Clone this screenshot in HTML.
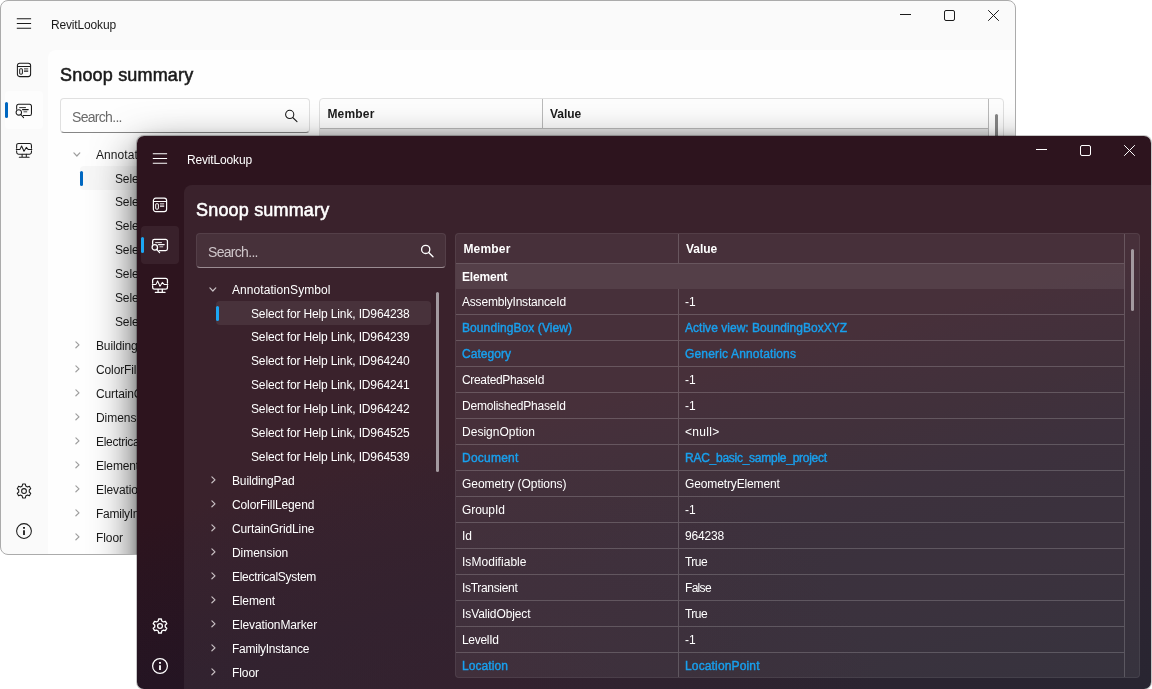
<!DOCTYPE html>
<html lang="en"><head><meta charset="utf-8"><title>RevitLookup</title>
<style>
*{box-sizing:border-box;margin:0;padding:0}
html,body{width:1152px;height:689px;overflow:hidden;background:#fff}
body{position:relative;font-family:"Liberation Sans",sans-serif;font-size:12px}
.win{position:absolute;overflow:hidden;will-change:transform;color:var(--fg);width:1016px;height:555px;border-radius:8px;border:1px solid var(--bd);background-clip:padding-box}
.win span,.win i{position:absolute;display:block}
.light{left:0;top:0;background-color:#fafafa;
 --bd:#ababab;--fg:#1b1b1b;--fg2:#6a6a6a;--fg3:#9e9e9e;--panel:#fefefe;--line:#bababa;--acc:#0067c0;--link:#0067c0;--selbg:#f7f7f7;--navsel:#fdfdfd;
 --gridbg:#fdfdfd;--groupbg:#e4e4e4;--sbg:#fefefe;--sbd:#e0e0e0;--sbb:#868686;--thumb:#868686}
.dark{left:136px;top:135px;background-image:radial-gradient(ellipse 420px 260px at 32% 100%,rgba(44,18,32,.55),rgba(44,18,32,0)),linear-gradient(165deg,#2d141e 0%,#2d141e 47%,#231523 67%,#1a1724 100%);
 --bd:rgba(0,0,0,.22);--fg:#ffffff;--fg2:#cfc6ca;--fg3:#c9c0c4;--line:rgba(255,255,255,.185);--acc:#1ca6f3;--link:#18a0ee;--selbg:rgba(255,255,255,.075);--navsel:rgba(255,255,255,.06);
 --gridbg:rgba(255,255,255,.068);--groupbg:rgba(255,255,255,.075);--sbg:rgba(255,255,255,.07);--sbd:rgba(255,255,255,.07);--sbb:#9a8c92;--thumb:#a39aa0}
.shadow{position:absolute;left:136px;top:135px;width:1014px;height:553px;border-radius:7px;box-shadow:0 16px 44px rgba(0,0,0,.7),0 1px 10px rgba(0,0,0,.2)}
.titlebar{position:absolute;left:0;top:0;right:0;height:48px}
.hamb{left:15px;top:17px;width:16px;height:12px;color:var(--fg)}
.hamb svg{display:block}
.apptitle{left:50px;top:16px;font-size:12px;line-height:16px;white-space:nowrap}
.cap{top:9px;width:11px;height:11px}
.cap svg{display:block}
.cmin{right:104px}.cmax{right:60px}.cx{right:16px}
.nav{position:absolute;left:0;top:0;width:48px;bottom:0}
.ni svg{display:block}
.n1{left:15px;top:61px}.n2{left:14px;top:101px}.n3{left:14px;top:141px}.n4{left:14px;top:481px}.n5{left:14px;top:521px}
.nsel{left:4px;top:90px;width:38px;height:38px;border-radius:4px;background:var(--navsel)}
.nind{left:4px;top:101px;width:3px;height:16px;border-radius:2px;background:var(--acc)}
.panel{position:absolute;left:47px;top:49px;right:0;bottom:0;border-top-left-radius:8px;background:var(--panel)}
.dark .panel{background:rgba(255,255,255,.062)}
.h1{position:absolute;left:12px;top:13px;font-size:18px;line-height:24px;white-space:nowrap;-webkit-text-stroke:.55px currentColor}
.search{position:absolute;left:12px;top:48px;width:250px;height:35px;border-radius:4px;background:var(--sbg);border:1px solid var(--sbd);border-bottom-color:var(--sbb)}
.ph{left:11px;top:10px;font-size:14px;line-height:17px;color:var(--fg2);white-space:nowrap}
.sicon{right:11px;top:10px;width:14px;height:14px}
.sicon svg{display:block}
.tree{position:absolute;left:12px;top:92px;width:250px;bottom:0}
.tn,.tc{position:absolute;left:0;width:100%;height:24px}
.tl{top:4px;line-height:16px;white-space:nowrap}
.tn .tl{left:36px}.tc .tl{left:55px}
.tn .chev{position:absolute;color:var(--fg3)}
.tn .cd{left:13px;top:9.800px}
.tn .cr{left:14.800px;top:6.850px}
.tc.sel::before{content:"";position:absolute;left:20px;top:0;width:215px;height:24px;border-radius:4px;background:var(--selbg)}
.tind{left:20px;top:4.500px;width:3px;height:15.500px;border-radius:2px;background:var(--acc)}
.tscroll{left:240px;top:15px;width:3px;height:180px;border-radius:2px;background:var(--thumb)}
.grid{position:absolute;left:271px;top:48px;right:11px;bottom:11px;border-radius:4px;overflow:hidden;background:var(--gridbg);border:1px solid var(--sbd)}
.gh,.gg,.gr{position:relative;height:26px;border-bottom:1px solid var(--line);margin-right:15px}
.gh{height:30px;font-weight:bold}
.gg{height:25px;font-weight:bold;border-bottom:0;background:var(--groupbg)}
.gh::after,.gr::after{content:"";position:absolute;left:222px;top:0;bottom:0;width:1px;background:var(--line)}
.c1{left:6px;top:5px;line-height:16px;white-space:nowrap}
.c2{left:229px;top:5px;line-height:16px;white-space:nowrap}
.gh .c1,.gh .c2{top:7px}
.gh .c1{left:7.4px}.gh .c2{left:230px}
.gg .c1{top:5px}
.lk{color:var(--link);-webkit-text-stroke:.4px currentColor}
.t0 .tl,.sel .tl{top:5px}
.gsb{right:14px;top:0;bottom:0;width:1px;background:var(--line)}
.gthumb{right:4.700px;top:15px;width:3.600px;height:62px;border-radius:2px;background:var(--thumb)}
.light .nav svg,.light .sicon svg{stroke-width:1.05}
.dark .sicon svg{stroke-width:1.35}

</style></head><body>
<div class="win light">
<div class="titlebar">
<span class="hamb"><svg width="16" height="12" viewBox="0 0 16 12"><path d="M0.8 0.75h14.3M0.8 5.5h14.3M0.8 10.25h14.3" stroke="currentColor" stroke-width="1" fill="none"/></svg></span><span class="apptitle" style="letter-spacing:-0.16px">RevitLookup</span>
<span class="cap cmin"><svg width="11" height="11" viewBox="0 0 11 11"><path d="M0 4.500h11" stroke="currentColor" stroke-width="1" fill="none"/></svg></span><span class="cap cmax"><svg width="11" height="11" viewBox="0 0 11 11"><rect x="0.500" y="0.500" width="10" height="10" rx="1.500" stroke="currentColor" stroke-width="1" fill="none"/></svg></span><span class="cap cx"><svg width="11" height="11" viewBox="0 0 11 11"><path d="M0.200 0.200l10.600 10.600M10.800 0.200L0.200 10.800" stroke="currentColor" stroke-width="1" fill="none"/></svg></span>
</div>
<div class="nav">
<span class="ni n1"><svg width="16" height="16" viewBox="0 0 16 16" fill="none" stroke="currentColor" stroke-width="1.2"><rect x="1.4" y="1.2" width="13.2" height="13.4" rx="2.3"/><path d="M1.4 4.5h13.2"/><rect x="3.7" y="6.8" width="2.7" height="5.3" rx="0.4" stroke-width="1"/><path d="M8 6.9h4.2" stroke-width="0.9"/><path d="M8 9.2h4.2" stroke-width="1.3"/></svg></span>
<span class="nsel"></span><span class="nind"></span><span class="ni n2"><svg width="18" height="17" viewBox="0 0 18 17" fill="none" stroke="currentColor" stroke-width="1.25"><path d="M1.65 7.2V4.1a1.8 1.8 0 0 1 1.8-1.8h11.2a1.8 1.8 0 0 1 1.8 1.8v7.6a1.8 1.8 0 0 1-1.8 1.8H8.2" stroke-linecap="round"/><path d="M4.6 5.6h5.9" stroke-width="0.9" stroke-linecap="round"/><path d="M7.6 7.6h5.6" stroke-width="1.2" stroke-linecap="round"/><path d="M8.9 9.8h2.9" stroke-width="0.8" stroke-linecap="round"/><circle cx="3.8" cy="10.4" r="2.7"/><path d="M5.8 12.5l2.8 3.1" stroke-linecap="round"/></svg></span>
<span class="ni n3"><svg width="18" height="17" viewBox="0 0 18 17" fill="none" stroke="currentColor" stroke-width="1.25"><path d="M1.65 6.2V3.3a1.9 1.9 0 0 1 1.9-1.9h11a1.9 1.9 0 0 1 1.9 1.9v2.9M1.65 8.7v1.6a1.9 1.9 0 0 0 1.9 1.9h11a1.9 1.9 0 0 0 1.9-1.9V8.700" stroke-linecap="round"/><path d="M1.3 7.4h3.7l1.6-3.4 2.4 5.3 2.3-3.9 1.8 2h3.700" stroke-width="1.05" stroke-linecap="round" stroke-linejoin="round"/><path d="M7.1 12.3v2.8M11.3 12.3v2.8M4.300 15.300h9.800" stroke-linecap="round"/></svg></span>
<span class="ni n4"><svg width="18" height="18" viewBox="0 0 18 18" fill="none" stroke="currentColor" stroke-width="1.3"><circle cx="9" cy="9" r="2.4"/><path d="M10.74 3.94 L10.36 1.98 L7.64 1.98 L7.26 3.94 L5.49 4.96 L3.60 4.31 L2.24 6.67 L3.75 7.98 L3.75 10.02 L2.24 11.33 L3.60 13.69 L5.49 13.04 L7.26 14.06 L7.64 16.02 L10.36 16.02 L10.74 14.06 L12.51 13.04 L14.40 13.69 L15.76 11.33 L14.25 10.02 L14.25 7.98 L15.76 6.67 L14.40 4.31 L12.51 4.96Z" stroke-linejoin="round"/></svg></span>
<span class="ni n5"><svg width="18" height="18" viewBox="0 0 18 18" fill="none" stroke="currentColor" stroke-width="1.25"><circle cx="9" cy="9" r="7.4"/><path d="M9 8.300v4.600" stroke-width="1.8"/><path d="M9 5v1.800" stroke-width="1.900"/></svg></span>
</div>
<div class="panel">
<div class="h1" style="letter-spacing:0.18px">Snoop summary</div>
<div class="search"><span class="ph" style="letter-spacing:-0.69px">Search...</span><span class="sicon"><svg width="14" height="14" viewBox="0 0 14 14" fill="none" stroke="currentColor" stroke-width="1.25"><circle cx="5.7" cy="5.400" r="4.1"/><path d="M8.700 8.500l4.300 4.200" stroke-linecap="round"/></svg></span></div>
<div class="tree">
<div class="tn t0" style="top:0"><svg class="chev cd" width="8" height="6" viewBox="0 0 8 6" fill="none" stroke="currentColor" stroke-width="1.2"><path d="M0.9 0.9l2.950 3.100 2.950-3.100" stroke-linecap="round" stroke-linejoin="round"/></svg><span class="tl" style="letter-spacing:0.07px">AnnotationSymbol</span></div>
<div class="tc sel" style="top:24px"><i class="tind"></i><span class="tl" style="letter-spacing:-0.14px">Select for Help Link, ID964238</span></div>
<div class="tc" style="top:48px"><span class="tl" style="letter-spacing:-0.14px">Select for Help Link, ID964239</span></div>
<div class="tc" style="top:72px"><span class="tl" style="letter-spacing:-0.14px">Select for Help Link, ID964240</span></div>
<div class="tc" style="top:96px"><span class="tl" style="letter-spacing:-0.14px">Select for Help Link, ID964241</span></div>
<div class="tc" style="top:120px"><span class="tl" style="letter-spacing:-0.14px">Select for Help Link, ID964242</span></div>
<div class="tc" style="top:144px"><span class="tl" style="letter-spacing:-0.14px">Select for Help Link, ID964525</span></div>
<div class="tc" style="top:168px"><span class="tl" style="letter-spacing:-0.14px">Select for Help Link, ID964539</span></div>
<div class="tn" style="top:192px"><svg class="chev cr" width="6" height="8" viewBox="0 0 6 8" fill="none" stroke="currentColor" stroke-width="1.2"><path d="M0.9 0.9l3.100 2.950-3.100 2.950" stroke-linecap="round" stroke-linejoin="round"/></svg><span class="tl" style="letter-spacing:-0.14px">BuildingPad</span></div>
<div class="tn" style="top:216px"><svg class="chev cr" width="6" height="8" viewBox="0 0 6 8" fill="none" stroke="currentColor" stroke-width="1.2"><path d="M0.9 0.9l3.100 2.950-3.100 2.950" stroke-linecap="round" stroke-linejoin="round"/></svg><span class="tl" style="letter-spacing:-0.12px">ColorFillLegend</span></div>
<div class="tn" style="top:240px"><svg class="chev cr" width="6" height="8" viewBox="0 0 6 8" fill="none" stroke="currentColor" stroke-width="1.2"><path d="M0.9 0.9l3.100 2.950-3.100 2.950" stroke-linecap="round" stroke-linejoin="round"/></svg><span class="tl" style="letter-spacing:-0.12px">CurtainGridLine</span></div>
<div class="tn" style="top:264px"><svg class="chev cr" width="6" height="8" viewBox="0 0 6 8" fill="none" stroke="currentColor" stroke-width="1.2"><path d="M0.9 0.9l3.100 2.950-3.100 2.950" stroke-linecap="round" stroke-linejoin="round"/></svg><span class="tl" style="letter-spacing:-0.05px">Dimension</span></div>
<div class="tn" style="top:288px"><svg class="chev cr" width="6" height="8" viewBox="0 0 6 8" fill="none" stroke="currentColor" stroke-width="1.2"><path d="M0.9 0.9l3.100 2.950-3.100 2.950" stroke-linecap="round" stroke-linejoin="round"/></svg><span class="tl" style="letter-spacing:-0.29px">ElectricalSystem</span></div>
<div class="tn" style="top:312px"><svg class="chev cr" width="6" height="8" viewBox="0 0 6 8" fill="none" stroke="currentColor" stroke-width="1.2"><path d="M0.9 0.9l3.100 2.950-3.100 2.950" stroke-linecap="round" stroke-linejoin="round"/></svg><span class="tl" style="letter-spacing:-0.15px">Element</span></div>
<div class="tn" style="top:336px"><svg class="chev cr" width="6" height="8" viewBox="0 0 6 8" fill="none" stroke="currentColor" stroke-width="1.2"><path d="M0.9 0.9l3.100 2.950-3.100 2.950" stroke-linecap="round" stroke-linejoin="round"/></svg><span class="tl" style="letter-spacing:-0.11px">ElevationMarker</span></div>
<div class="tn" style="top:360px"><svg class="chev cr" width="6" height="8" viewBox="0 0 6 8" fill="none" stroke="currentColor" stroke-width="1.2"><path d="M0.9 0.9l3.100 2.950-3.100 2.950" stroke-linecap="round" stroke-linejoin="round"/></svg><span class="tl" style="letter-spacing:-0.26px">FamilyInstance</span></div>
<div class="tn" style="top:384px"><svg class="chev cr" width="6" height="8" viewBox="0 0 6 8" fill="none" stroke="currentColor" stroke-width="1.2"><path d="M0.9 0.9l3.100 2.950-3.100 2.950" stroke-linecap="round" stroke-linejoin="round"/></svg><span class="tl" style="letter-spacing:-0.07px">Floor</span></div>
<i class="tscroll"></i>
</div>
<div class="grid">
<div class="gh"><span class="c1" style="letter-spacing:0.20px">Member</span><span class="c2" style="letter-spacing:-0.07px">Value</span></div>
<div class="gg"><span class="c1" style="letter-spacing:-0.18px">Element</span></div>
<div class="gr"><span class="c1" style="letter-spacing:-0.19px">AssemblyInstanceId</span><span class="c2" style="letter-spacing:-0.04px">-1</span></div>
<div class="gr lk"><span class="c1" style="letter-spacing:0.09px">BoundingBox (View)</span><span class="c2" style="letter-spacing:0.03px">Active view: BoundingBoxXYZ</span></div>
<div class="gr lk"><span class="c1" style="letter-spacing:0.06px">Category</span><span class="c2" style="letter-spacing:0.16px">Generic Annotations</span></div>
<div class="gr"><span class="c1" style="letter-spacing:-0.34px">CreatedPhaseId</span><span class="c2" style="letter-spacing:-0.04px">-1</span></div>
<div class="gr"><span class="c1" style="letter-spacing:-0.21px">DemolishedPhaseId</span><span class="c2" style="letter-spacing:-0.04px">-1</span></div>
<div class="gr"><span class="c1" style="letter-spacing:0.02px">DesignOption</span><span class="c2" style="letter-spacing:0.32px">&lt;null&gt;</span></div>
<div class="gr lk"><span class="c1" style="letter-spacing:0.23px">Document</span><span class="c2" style="letter-spacing:-0.26px">RAC_basic_sample_project</span></div>
<div class="gr"><span class="c1" style="letter-spacing:-0.05px">Geometry (Options)</span><span class="c2" style="letter-spacing:-0.13px">GeometryElement</span></div>
<div class="gr"><span class="c1" style="letter-spacing:-0.09px">GroupId</span><span class="c2" style="letter-spacing:-0.04px">-1</span></div>
<div class="gr"><span class="c1" style="letter-spacing:-0.10px">Id</span><span class="c2" style="letter-spacing:-0.17px">964238</span></div>
<div class="gr"><span class="c1" style="letter-spacing:0.04px">IsModifiable</span><span class="c2" style="letter-spacing:-0.51px">True</span></div>
<div class="gr"><span class="c1" style="letter-spacing:-0.32px">IsTransient</span><span class="c2" style="letter-spacing:-0.69px">False</span></div>
<div class="gr"><span class="c1" style="letter-spacing:-0.10px">IsValidObject</span><span class="c2" style="letter-spacing:-0.51px">True</span></div>
<div class="gr"><span class="c1" style="letter-spacing:-0.31px">LevelId</span><span class="c2" style="letter-spacing:-0.04px">-1</span></div>
<div class="gr lk"><span class="c1" style="letter-spacing:0.07px">Location</span><span class="c2" style="letter-spacing:0.15px">LocationPoint</span></div>
<i class="gsb"></i><i class="gthumb"></i>
</div>
</div>
<div class="shadow"></div>
</div>
<div class="win dark">
<div class="titlebar">
<span class="hamb"><svg width="16" height="12" viewBox="0 0 16 12"><path d="M0.8 0.75h14.3M0.8 5.5h14.3M0.8 10.25h14.3" stroke="currentColor" stroke-width="1" fill="none"/></svg></span><span class="apptitle" style="letter-spacing:-0.16px">RevitLookup</span>
<span class="cap cmin"><svg width="11" height="11" viewBox="0 0 11 11"><path d="M0 4.500h11" stroke="currentColor" stroke-width="1" fill="none"/></svg></span><span class="cap cmax"><svg width="11" height="11" viewBox="0 0 11 11"><rect x="0.500" y="0.500" width="10" height="10" rx="1.500" stroke="currentColor" stroke-width="1" fill="none"/></svg></span><span class="cap cx"><svg width="11" height="11" viewBox="0 0 11 11"><path d="M0.200 0.200l10.600 10.600M10.800 0.200L0.200 10.800" stroke="currentColor" stroke-width="1" fill="none"/></svg></span>
</div>
<div class="nav">
<span class="ni n1"><svg width="16" height="16" viewBox="0 0 16 16" fill="none" stroke="currentColor" stroke-width="1.2"><rect x="1.4" y="1.2" width="13.2" height="13.4" rx="2.3"/><path d="M1.4 4.5h13.2"/><rect x="3.7" y="6.8" width="2.7" height="5.3" rx="0.4" stroke-width="1"/><path d="M8 6.9h4.2" stroke-width="0.9"/><path d="M8 9.2h4.2" stroke-width="1.3"/></svg></span>
<span class="nsel"></span><span class="nind"></span><span class="ni n2"><svg width="18" height="17" viewBox="0 0 18 17" fill="none" stroke="currentColor" stroke-width="1.25"><path d="M1.65 7.2V4.1a1.8 1.8 0 0 1 1.8-1.8h11.2a1.8 1.8 0 0 1 1.8 1.8v7.6a1.8 1.8 0 0 1-1.8 1.8H8.2" stroke-linecap="round"/><path d="M4.6 5.6h5.9" stroke-width="0.9" stroke-linecap="round"/><path d="M7.6 7.6h5.6" stroke-width="1.2" stroke-linecap="round"/><path d="M8.9 9.8h2.9" stroke-width="0.8" stroke-linecap="round"/><circle cx="3.8" cy="10.4" r="2.7"/><path d="M5.8 12.5l2.8 3.1" stroke-linecap="round"/></svg></span>
<span class="ni n3"><svg width="18" height="17" viewBox="0 0 18 17" fill="none" stroke="currentColor" stroke-width="1.25"><path d="M1.65 6.2V3.3a1.9 1.9 0 0 1 1.9-1.9h11a1.9 1.9 0 0 1 1.9 1.9v2.9M1.65 8.7v1.6a1.9 1.9 0 0 0 1.9 1.9h11a1.9 1.9 0 0 0 1.9-1.9V8.700" stroke-linecap="round"/><path d="M1.3 7.4h3.7l1.6-3.4 2.4 5.3 2.3-3.9 1.8 2h3.700" stroke-width="1.05" stroke-linecap="round" stroke-linejoin="round"/><path d="M7.1 12.3v2.8M11.3 12.3v2.8M4.300 15.300h9.800" stroke-linecap="round"/></svg></span>
<span class="ni n4"><svg width="18" height="18" viewBox="0 0 18 18" fill="none" stroke="currentColor" stroke-width="1.3"><circle cx="9" cy="9" r="2.4"/><path d="M10.74 3.94 L10.36 1.98 L7.64 1.98 L7.26 3.94 L5.49 4.96 L3.60 4.31 L2.24 6.67 L3.75 7.98 L3.75 10.02 L2.24 11.33 L3.60 13.69 L5.49 13.04 L7.26 14.06 L7.64 16.02 L10.36 16.02 L10.74 14.06 L12.51 13.04 L14.40 13.69 L15.76 11.33 L14.25 10.02 L14.25 7.98 L15.76 6.67 L14.40 4.31 L12.51 4.96Z" stroke-linejoin="round"/></svg></span>
<span class="ni n5"><svg width="18" height="18" viewBox="0 0 18 18" fill="none" stroke="currentColor" stroke-width="1.25"><circle cx="9" cy="9" r="7.4"/><path d="M9 8.300v4.600" stroke-width="1.8"/><path d="M9 5v1.800" stroke-width="1.900"/></svg></span>
</div>
<div class="panel">
<div class="h1" style="letter-spacing:0.18px">Snoop summary</div>
<div class="search"><span class="ph" style="letter-spacing:-0.69px">Search...</span><span class="sicon"><svg width="14" height="14" viewBox="0 0 14 14" fill="none" stroke="currentColor" stroke-width="1.25"><circle cx="5.7" cy="5.400" r="4.1"/><path d="M8.700 8.500l4.300 4.200" stroke-linecap="round"/></svg></span></div>
<div class="tree">
<div class="tn t0" style="top:0"><svg class="chev cd" width="8" height="6" viewBox="0 0 8 6" fill="none" stroke="currentColor" stroke-width="1.2"><path d="M0.9 0.9l2.950 3.100 2.950-3.100" stroke-linecap="round" stroke-linejoin="round"/></svg><span class="tl" style="letter-spacing:0.07px">AnnotationSymbol</span></div>
<div class="tc sel" style="top:24px"><i class="tind"></i><span class="tl" style="letter-spacing:-0.14px">Select for Help Link, ID964238</span></div>
<div class="tc" style="top:48px"><span class="tl" style="letter-spacing:-0.14px">Select for Help Link, ID964239</span></div>
<div class="tc" style="top:72px"><span class="tl" style="letter-spacing:-0.14px">Select for Help Link, ID964240</span></div>
<div class="tc" style="top:96px"><span class="tl" style="letter-spacing:-0.14px">Select for Help Link, ID964241</span></div>
<div class="tc" style="top:120px"><span class="tl" style="letter-spacing:-0.14px">Select for Help Link, ID964242</span></div>
<div class="tc" style="top:144px"><span class="tl" style="letter-spacing:-0.14px">Select for Help Link, ID964525</span></div>
<div class="tc" style="top:168px"><span class="tl" style="letter-spacing:-0.14px">Select for Help Link, ID964539</span></div>
<div class="tn" style="top:192px"><svg class="chev cr" width="6" height="8" viewBox="0 0 6 8" fill="none" stroke="currentColor" stroke-width="1.2"><path d="M0.9 0.9l3.100 2.950-3.100 2.950" stroke-linecap="round" stroke-linejoin="round"/></svg><span class="tl" style="letter-spacing:-0.14px">BuildingPad</span></div>
<div class="tn" style="top:216px"><svg class="chev cr" width="6" height="8" viewBox="0 0 6 8" fill="none" stroke="currentColor" stroke-width="1.2"><path d="M0.9 0.9l3.100 2.950-3.100 2.950" stroke-linecap="round" stroke-linejoin="round"/></svg><span class="tl" style="letter-spacing:-0.12px">ColorFillLegend</span></div>
<div class="tn" style="top:240px"><svg class="chev cr" width="6" height="8" viewBox="0 0 6 8" fill="none" stroke="currentColor" stroke-width="1.2"><path d="M0.9 0.9l3.100 2.950-3.100 2.950" stroke-linecap="round" stroke-linejoin="round"/></svg><span class="tl" style="letter-spacing:-0.12px">CurtainGridLine</span></div>
<div class="tn" style="top:264px"><svg class="chev cr" width="6" height="8" viewBox="0 0 6 8" fill="none" stroke="currentColor" stroke-width="1.2"><path d="M0.9 0.9l3.100 2.950-3.100 2.950" stroke-linecap="round" stroke-linejoin="round"/></svg><span class="tl" style="letter-spacing:-0.05px">Dimension</span></div>
<div class="tn" style="top:288px"><svg class="chev cr" width="6" height="8" viewBox="0 0 6 8" fill="none" stroke="currentColor" stroke-width="1.2"><path d="M0.9 0.9l3.100 2.950-3.100 2.950" stroke-linecap="round" stroke-linejoin="round"/></svg><span class="tl" style="letter-spacing:-0.29px">ElectricalSystem</span></div>
<div class="tn" style="top:312px"><svg class="chev cr" width="6" height="8" viewBox="0 0 6 8" fill="none" stroke="currentColor" stroke-width="1.2"><path d="M0.9 0.9l3.100 2.950-3.100 2.950" stroke-linecap="round" stroke-linejoin="round"/></svg><span class="tl" style="letter-spacing:-0.15px">Element</span></div>
<div class="tn" style="top:336px"><svg class="chev cr" width="6" height="8" viewBox="0 0 6 8" fill="none" stroke="currentColor" stroke-width="1.2"><path d="M0.9 0.9l3.100 2.950-3.100 2.950" stroke-linecap="round" stroke-linejoin="round"/></svg><span class="tl" style="letter-spacing:-0.11px">ElevationMarker</span></div>
<div class="tn" style="top:360px"><svg class="chev cr" width="6" height="8" viewBox="0 0 6 8" fill="none" stroke="currentColor" stroke-width="1.2"><path d="M0.9 0.9l3.100 2.950-3.100 2.950" stroke-linecap="round" stroke-linejoin="round"/></svg><span class="tl" style="letter-spacing:-0.26px">FamilyInstance</span></div>
<div class="tn" style="top:384px"><svg class="chev cr" width="6" height="8" viewBox="0 0 6 8" fill="none" stroke="currentColor" stroke-width="1.2"><path d="M0.9 0.9l3.100 2.950-3.100 2.950" stroke-linecap="round" stroke-linejoin="round"/></svg><span class="tl" style="letter-spacing:-0.07px">Floor</span></div>
<i class="tscroll"></i>
</div>
<div class="grid">
<div class="gh"><span class="c1" style="letter-spacing:0.20px">Member</span><span class="c2" style="letter-spacing:-0.07px">Value</span></div>
<div class="gg"><span class="c1" style="letter-spacing:-0.18px">Element</span></div>
<div class="gr"><span class="c1" style="letter-spacing:-0.19px">AssemblyInstanceId</span><span class="c2" style="letter-spacing:-0.04px">-1</span></div>
<div class="gr lk"><span class="c1" style="letter-spacing:0.09px">BoundingBox (View)</span><span class="c2" style="letter-spacing:0.03px">Active view: BoundingBoxXYZ</span></div>
<div class="gr lk"><span class="c1" style="letter-spacing:0.06px">Category</span><span class="c2" style="letter-spacing:0.16px">Generic Annotations</span></div>
<div class="gr"><span class="c1" style="letter-spacing:-0.34px">CreatedPhaseId</span><span class="c2" style="letter-spacing:-0.04px">-1</span></div>
<div class="gr"><span class="c1" style="letter-spacing:-0.21px">DemolishedPhaseId</span><span class="c2" style="letter-spacing:-0.04px">-1</span></div>
<div class="gr"><span class="c1" style="letter-spacing:0.02px">DesignOption</span><span class="c2" style="letter-spacing:0.32px">&lt;null&gt;</span></div>
<div class="gr lk"><span class="c1" style="letter-spacing:0.23px">Document</span><span class="c2" style="letter-spacing:-0.26px">RAC_basic_sample_project</span></div>
<div class="gr"><span class="c1" style="letter-spacing:-0.05px">Geometry (Options)</span><span class="c2" style="letter-spacing:-0.13px">GeometryElement</span></div>
<div class="gr"><span class="c1" style="letter-spacing:-0.09px">GroupId</span><span class="c2" style="letter-spacing:-0.04px">-1</span></div>
<div class="gr"><span class="c1" style="letter-spacing:-0.10px">Id</span><span class="c2" style="letter-spacing:-0.17px">964238</span></div>
<div class="gr"><span class="c1" style="letter-spacing:0.04px">IsModifiable</span><span class="c2" style="letter-spacing:-0.51px">True</span></div>
<div class="gr"><span class="c1" style="letter-spacing:-0.32px">IsTransient</span><span class="c2" style="letter-spacing:-0.69px">False</span></div>
<div class="gr"><span class="c1" style="letter-spacing:-0.10px">IsValidObject</span><span class="c2" style="letter-spacing:-0.51px">True</span></div>
<div class="gr"><span class="c1" style="letter-spacing:-0.31px">LevelId</span><span class="c2" style="letter-spacing:-0.04px">-1</span></div>
<div class="gr lk"><span class="c1" style="letter-spacing:0.07px">Location</span><span class="c2" style="letter-spacing:0.15px">LocationPoint</span></div>
<i class="gsb"></i><i class="gthumb"></i>
</div>
</div>
</div>
</body></html>
